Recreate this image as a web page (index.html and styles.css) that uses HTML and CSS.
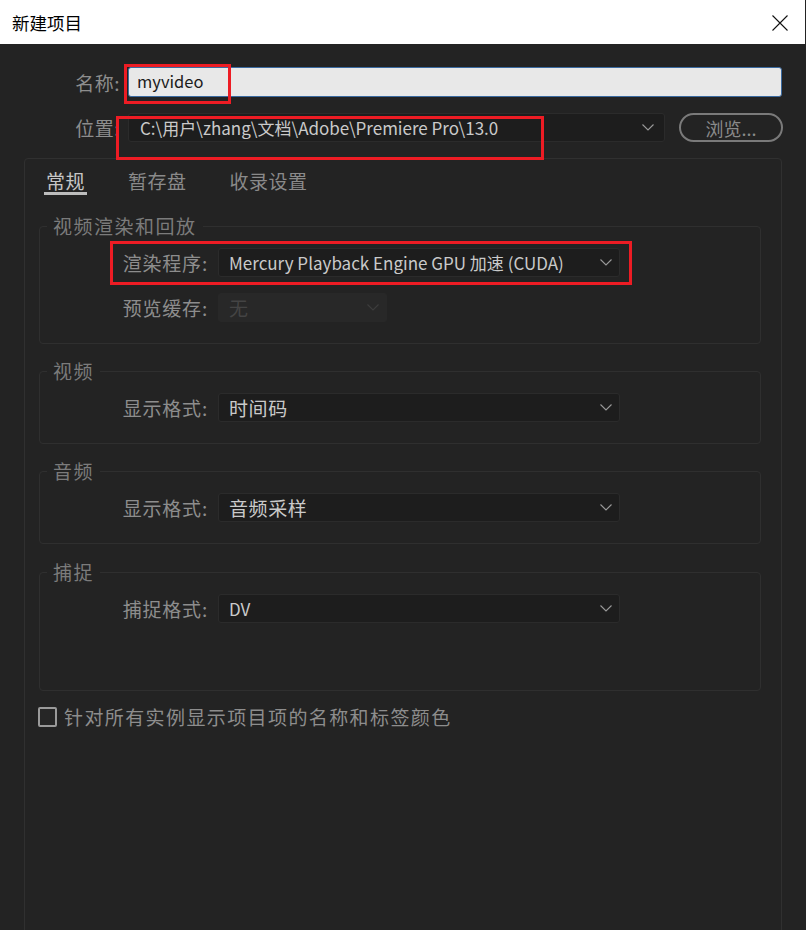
FILE: index.html
```html
<!DOCTYPE html>
<html lang="zh-CN">
<head>
<meta charset="utf-8">
<title>新建项目</title>
<link rel="stylesheet" href="styles.css">
</head>
<body>
<div class="titlebar">
  <span class="title">新建项目</span>
  <svg class="close" width="16" height="16" viewBox="0 0 16 16"><path d="M0.5 0.5 L15.5 15.5 M15.5 0.5 L0.5 15.5" stroke="#111" stroke-width="1.1" fill="none"/></svg>
</div>
<div class="content">
  <div class="top-row">
    <label class="top-label">名称:</label>
    <div class="name-input">myvideo</div>
  </div>
  <div class="top-row loc-row">
    <label class="top-label">位置:</label>
    <div class="select loc-select"><span>C:\用户\zhang\文档\Adobe\Premiere Pro\13.0</span><svg class="chev" width="12" height="7" viewBox="0 0 12 7"><path d="M0.5 0.5 L6 6 L11.5 0.5" stroke="#9a9a9a" stroke-width="1.1" fill="none"/></svg></div>
    <div class="browse">浏览...</div>
  </div>
  <div class="panel">
    <div class="tabs">
      <span class="tab active">常规</span>
      <span class="tab">暂存盘</span>
      <span class="tab">收录设置</span>
    </div>
    <fieldset class="group g1">
      <legend>视频渲染和回放</legend>
      <div class="row">
        <span class="lbl">渲染程序:</span>
        <div class="select wide"><span>Mercury Playback Engine GPU 加速 (CUDA)</span><svg class="chev" width="12" height="7" viewBox="0 0 12 7"><path d="M0.5 0.5 L6 6 L11.5 0.5" stroke="#9a9a9a" stroke-width="1.1" fill="none"/></svg></div>
      </div>
      <div class="row">
        <span class="lbl">预览缓存:</span>
        <div class="select narrow disabled"><span class="zh">无</span><svg class="chev" width="12" height="7" viewBox="0 0 12 7"><path d="M0.5 0.5 L6 6 L11.5 0.5" stroke="#3d3d3d" stroke-width="1.1" fill="none"/></svg></div>
      </div>
    </fieldset>
    <fieldset class="group">
      <legend>视频</legend>
      <div class="row">
        <span class="lbl">显示格式:</span>
        <div class="select wide"><span class="zh">时间码</span><svg class="chev" width="12" height="7" viewBox="0 0 12 7"><path d="M0.5 0.5 L6 6 L11.5 0.5" stroke="#9a9a9a" stroke-width="1.1" fill="none"/></svg></div>
      </div>
    </fieldset>
    <fieldset class="group">
      <legend>音频</legend>
      <div class="row">
        <span class="lbl">显示格式:</span>
        <div class="select wide"><span class="zh">音频采样</span><svg class="chev" width="12" height="7" viewBox="0 0 12 7"><path d="M0.5 0.5 L6 6 L11.5 0.5" stroke="#9a9a9a" stroke-width="1.1" fill="none"/></svg></div>
      </div>
    </fieldset>
    <fieldset class="group g4">
      <legend>捕捉</legend>
      <div class="row">
        <span class="lbl">捕捉格式:</span>
        <div class="select wide"><span>DV</span><svg class="chev" width="12" height="7" viewBox="0 0 12 7"><path d="M0.5 0.5 L6 6 L11.5 0.5" stroke="#9a9a9a" stroke-width="1.1" fill="none"/></svg></div>
      </div>
    </fieldset>
    <div class="check-row">
      <span class="checkbox"></span>
      <span class="check-text">针对所有实例显示项目项的名称和标签颜色</span>
    </div>
  </div>
</div>
<div class="mark mark-name"></div>
<div class="mark mark-loc"></div>
<div class="mark mark-render"></div>
</body>
</html>
```
FILE: styles.css
```css
html, body {
  margin: 0;
  padding: 0;
}
body {
  width: 806px;
  height: 930px;
  overflow: hidden;
  background: #232323;
  font-family: "Noto Sans CJK SC", "Noto Sans", sans-serif;
  position: relative;
}
.titlebar {
  height: 44px;
  background: #ffffff;
  display: flex;
  align-items: center;
  justify-content: space-between;
  padding: 0 17px 0 12px;
  margin-right: 1px;
  box-sizing: border-box;
}
.title {
  font-size: 17.5px;
  color: #000;
}
.close {
  display: block;
  margin-top: 1px;
}
.content {
  padding-top: 23px;
  height: 886px;
  box-sizing: border-box;
  overflow: hidden;
}
.top-row {
  display: flex;
  align-items: center;
  gap: 8px;
}
.loc-row {
  margin-top: 16px;
}
.top-label {
  width: 120px;
  text-align: right;
  font-size: 19px;
  color: #8d8d8d;
  letter-spacing: 0.5px;
}
.name-input {
  width: 654px;
  height: 30px;
  box-sizing: border-box;
  background: #e8e8e8;
  border: 1.5px solid #3a6aa0;
  border-radius: 3px;
  padding-left: 8px;
  font-size: 16.5px;
  line-height: 26px;
  color: #1b1b1b;
}
.select {
  height: 29px;
  box-sizing: border-box;
  background: #1d1d1d;
  border: 1px solid #2b2b2b;
  border-radius: 3px;
  display: flex;
  align-items: center;
  justify-content: space-between;
  padding: 0 7px 0 10px;
  font-size: 17px;
  color: #cacaca;
}
.select span {
  line-height: 27px;
}
.select .zh {
  font-size: 19px;
  letter-spacing: 0.6px;
}
.loc-select {
  width: 537px;
  padding-left: 11px;
  padding-right: 10px;
}
.browse {
  margin-left: 6px;
  width: 104px;
  height: 29px;
  box-sizing: border-box;
  border: 2px solid #7a7a7a;
  border-radius: 15px;
  display: flex;
  align-items: center;
  justify-content: center;
  font-size: 18px;
  color: #8a8a8a;
}
.panel {
  margin: 16px 0 0 24px;
  width: 758px;
  height: 800px;
  box-sizing: border-box;
  border: 1px solid #303030;
  border-radius: 4px;
  padding: 11px 20px 0 14px;
}
.tabs {
  display: flex;
  gap: 39px;
  padding-left: 5px;
}
.tab {
  font-size: 19px;
  line-height: 22px;
  letter-spacing: 0.5px;
  color: #8a8a8a;
  padding: 0 2px;
  border-bottom: 3px solid transparent;
}
.tab.active {
  color: #c6c6c6;
  border-bottom-color: #bdbdbd;
}
.group {
  margin: 20px 0 0 0;
  padding: 11px 0 21px 0;
  border: 1px solid #2f2f2f;
  border-radius: 4px;
  min-inline-size: 0;
}
.group + .group {
  margin-top: 16px;
}
.g4 {
  margin-top: 17px !important;
  padding-bottom: 67px;
}
.group legend {
  margin-left: 7px;
  padding: 0 6px;
  font-size: 19px;
  line-height: 22px;
  letter-spacing: 1.5px;
  color: #7b7b7b;
}
.row {
  display: flex;
  align-items: center;
  gap: 10px;
}
.row + .row {
  margin-top: 16px;
}
.lbl {
  width: 168px;
  text-align: right;
  font-size: 19px;
  letter-spacing: 0.8px;
  color: #8d8d8d;
}
.wide {
  width: 402px;
}
.narrow {
  width: 169px;
}
.disabled {
  background: #282828;
  border-color: #282828;
  color: #444444;
}
.check-row {
  display: flex;
  align-items: center;
  gap: 7px;
  margin-top: 12px;
  margin-left: -1px;
}
.checkbox {
  width: 19px;
  height: 20px;
  box-sizing: border-box;
  border: 2px solid #9a9a9a;
  border-radius: 2px;
  background: #262626;
}
.check-text {
  font-size: 19px;
  letter-spacing: 1.4px;
  color: #8d8d8d;
}
.mark {
  position: absolute;
  border: 3px solid #ed1c24;
  box-sizing: border-box;
}
.mark-name {
  left: 124px;
  top: 64px;
  width: 107px;
  height: 40px;
}
.mark-loc {
  left: 116px;
  top: 116px;
  width: 428px;
  height: 44px;
}
.mark-render {
  left: 110px;
  top: 241px;
  width: 522px;
  height: 44px;
}
```
